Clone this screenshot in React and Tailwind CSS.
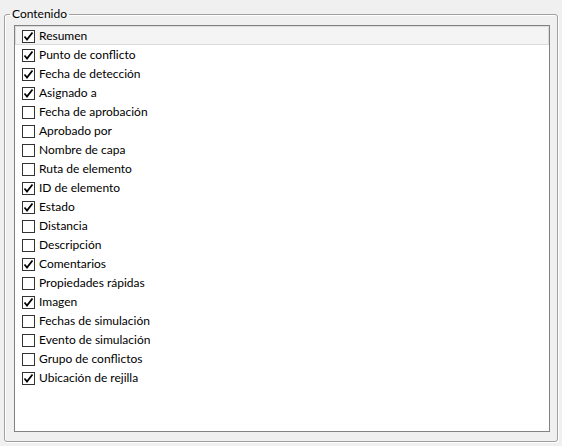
const items = [
  ['Resumen', true],
  ['Punto de conflicto', true],
  ['Fecha de detección', true],
  ['Asignado a', true],
  ['Fecha de aprobación', false],
  ['Aprobado por', false],
  ['Nombre de capa', false],
  ['Ruta de elemento', false],
  ['ID de elemento', true],
  ['Estado', true],
  ['Distancia', false],
  ['Descripción', false],
  ['Comentarios', true],
  ['Propiedades rápidas', false],
  ['Imagen', true],
  ['Fechas de simulación', false],
  ['Evento de simulación', false],
  ['Grupo de conflictos', false],
  ['Ubicación de rejilla', true],
];

function Check({ checked }) {
  return (
    <span className="flex h-[13px] w-[13px] shrink-0 items-center justify-center border border-[#333333] bg-white">
      {checked && (
        <svg width="11" height="11" viewBox="0 0 11 11">
          <path d="M1.5 5.5 L4 8.5 L9.5 1.5" fill="none" stroke="#000" strokeWidth="1.8" />
        </svg>
      )}
    </span>
  );
}

export default function App() {
  return (
    <div
      className="h-[446px] w-[562px] bg-[#f0f0f0] px-[4px] pb-[4px] pt-[6px] text-[12px] text-black"
      style={{ fontFamily: 'Lato, "Noto Sans", sans-serif' }}
    >
      <fieldset className="flex h-full flex-col rounded-[3px] border border-[#a0a0a0] shadow-[inset_1px_1px_0_#ffffff,1px_1px_0_#ffffff]">
        <legend className="ml-[5px] px-[2px] leading-[16px]">Contenido</legend>
        <div className="flex min-h-0 flex-1 flex-col pb-[9px] pl-[9px] pr-[7px] pt-[3px]">
          <div className="flex-1 border border-[#828282] bg-white">
            {items.map(([label, checked], i) => (
              <div
                key={label}
                className={
                  i === 0
                    ? 'flex h-[19px] items-center gap-[4px] border border-[#dcdcdc] bg-[#f4f4f4] pl-[6px] pt-[1px]'
                    : 'flex h-[19px] items-center gap-[4px] pl-[7px] pt-[1px]'
                }
              >
                <Check checked={checked} />
                <span className="leading-none">{label}</span>
              </div>
            ))}
          </div>
        </div>
      </fieldset>
    </div>
  );
}
